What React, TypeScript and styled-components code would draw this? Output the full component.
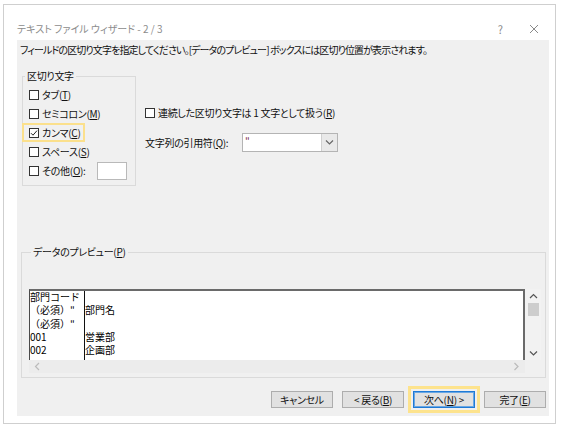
import React from 'react';
import styled, { createGlobalStyle } from 'styled-components';

const GlobalStyle = createGlobalStyle`
  html, body {
    margin: 0;
    padding: 0;
    background: #fff;
  }
  body {
    font-family: "Noto Sans CJK JP", "Noto Sans", sans-serif;
    font-feature-settings: "palt";
    color: #111;
  }
`;

type Option = { label: string; key: string; checked?: boolean; focused?: boolean };

const delimiters: Option[] = [
  { label: 'タブ', key: 'T' },
  { label: 'セミコロン', key: 'M' },
  { label: 'カンマ', key: 'C', checked: true, focused: true },
  { label: 'スペース', key: 'S' },
];

// preview grid: [column 1, column 2, row height]
const previewRows: [string, string, number][] = [
  ['部門コード', '', 12],
  ['（必須）"', '部門名', 14],
  ['（必須）"', '', 13],
  ['001', '営業部', 13],
  ['002', '企画部', 13],
];

const Accel: React.FC<{ label: string; k: string; suffix?: string }> = ({ label, k, suffix = '' }) => (
  <span>
    {label}(<u>{k}</u>){suffix}
  </span>
);

const CheckBox: React.FC<{ checked?: boolean }> = ({ checked }) => (
  <Box>
    {checked && (
      <svg width="8" height="8" viewBox="0 0 8 8">
        <polyline points="1,4.2 3,6.2 7,1.6" fill="none" stroke="#222" strokeWidth="1" />
      </svg>
    )}
  </Box>
);

const Chevron: React.FC<{ dir: 'up' | 'down' | 'left' | 'right'; color?: string }> = ({ dir, color = '#555' }) => {
  const pts = {
    up: '1,5 4.5,1.5 8,5',
    down: '1,1.5 4.5,5 8,1.5',
    left: '5,1 1.5,4.5 5,8',
    right: '1.5,1 5,4.5 1.5,8',
  }[dir];
  const vertical = dir === 'up' || dir === 'down';
  return (
    <svg width={vertical ? 9 : 7} height={vertical ? 7 : 9} viewBox={vertical ? '0 0 9 7' : '0 0 7 9'}>
      <polyline points={pts} fill="none" stroke={color} strokeWidth="1.2" />
    </svg>
  );
};

const App: React.FC = () => {
  return (
    <>
      <GlobalStyle />
      <Window>
        <TitleBar>
          <Title>テキスト ファイル ウィザード - 2 / 3</Title>
          <TitleIcons>
            <span>?</span>
            <svg width="10" height="10" viewBox="0 0 10 10">
              <path d="M1 1 L9 9 M9 1 L1 9" stroke="#8a8a8a" strokeWidth="1" />
            </svg>
          </TitleIcons>
        </TitleBar>

        <Body>
          <Instruction>
            フィールドの区切り文字を指定してください。[データのプレビュー] ボックスには区切り位置が表示されます。
          </Instruction>

          <OptionsRow>
            <DelimiterGroup>
              <GroupLabel>区切り文字</GroupLabel>
              {delimiters.map((d) => (
                <OptionRow key={d.key} $focused={d.focused}>
                  <CheckBox checked={d.checked} />
                  <Accel label={d.label} k={d.key} />
                </OptionRow>
              ))}
              <OptionRow>
                <CheckBox />
                <Accel label="その他" k="O" suffix=":" />
                <OtherInput />
              </OptionRow>
            </DelimiterGroup>

            <SideOptions>
              <Line>
                <CheckBox />
                <span>
                  連続した区切り文字は 1 文字として扱う(<u>R</u>)
                </span>
              </Line>
              <Line $gap={11}>
                <QuoteLabel>
                  <Accel label="文字列の引用符" k="Q" suffix=":" />
                </QuoteLabel>
                <Combo>
                  <ComboValue>"</ComboValue>
                  <ComboArrow>
                    <Chevron dir="down" color="#666" />
                  </ComboArrow>
                </Combo>
              </Line>
            </SideOptions>
          </OptionsRow>

          <PreviewGroup>
            <GroupLabel>
              データのプレビュー(<u>P</u>)
            </GroupLabel>
            <ListBox>
              <Sheet>
                <SheetColumn $width={55} $divider>
                  {previewRows.map(([a, , h], i) => (
                    <Cell key={i} $h={h}>
                      {a}
                    </Cell>
                  ))}
                </SheetColumn>
                <SheetColumn>
                  {previewRows.map(([, b, h], i) => (
                    <Cell key={i} $h={h}>
                      {b}
                    </Cell>
                  ))}
                </SheetColumn>
              </Sheet>
              <VScroll>
                <Chevron dir="up" color="#555" />
                <Thumb />
                <Spacer />
                <Chevron dir="down" color="#555" />
              </VScroll>
              <HScroll>
                <Chevron dir="left" color="#bbb" />
                <Chevron dir="right" color="#bbb" />
              </HScroll>
              <Corner />
            </ListBox>
          </PreviewGroup>

          <ButtonRow>
            <Button>キャンセル</Button>
            <Button>
              &lt; 戻る(<u>B</u>)
            </Button>
            <Button $primary>
              次へ(<u>N</u>) &gt;
            </Button>
            <Button>
              完了(<u>E</u>)
            </Button>
          </ButtonRow>
        </Body>
      </Window>
    </>
  );
};

export default App;

const Window = styled.div`
  box-sizing: border-box;
  width: 553px;
  height: 420px;
  margin: 4px 0 0 3px;
  border: 1px solid #cfcfcf;
  background: #fff;
  display: flex;
  flex-direction: column;
`;

const TitleBar = styled.div`
  box-sizing: border-box;
  height: 35px;
  padding: 17px 16px 4px 13px;
  display: flex;
  align-items: center;
  font-size: 10px;
  line-height: 14px;
  color: #8c8c8c;
`;

const Title = styled.span`
  flex: 1;
`;

const TitleIcons = styled.div`
  display: flex;
  align-items: center;
  gap: 26px;
  font-size: 11px;
  color: #8a8a8a;
`;

const Body = styled.div`
  box-sizing: border-box;
  height: 376px;
  margin: 0 6px 0 13px;
  padding: 3px 3px 0 3px;
  background: #f0f0f0;
  display: flex;
  flex-direction: column;
  font-size: 10px;
  letter-spacing: -0.3px;
`;

const Instruction = styled.div`
  line-height: 14px;
  white-space: nowrap;
  letter-spacing: -0.9px;
`;

const OptionsRow = styled.div`
  display: flex;
  margin-top: 12px;
`;

const Group = styled.fieldset`
  box-sizing: border-box;
  margin: 0;
  min-width: 0;
  border: 1px solid #dadada;
`;

const GroupLabel = styled.legend`
  margin-left: 2px;
  padding: 0 2px;
  font-size: 10px;
  line-height: 14px;
`;

const DelimiterGroup = styled(Group)`
  width: 114px;
  margin-left: 2px;
  padding: 2px 0 5px 0;
`;

const OptionRow = styled.label<{ $focused?: boolean }>`
  box-sizing: border-box;
  display: flex;
  align-items: center;
  gap: 3px;
  width: fit-content;
  height: 19px;
  margin-left: -1px;
  padding: 0 3px 0 5px;
  border: 2px solid ${(p) => (p.$focused ? '#fbe08c' : 'transparent')};
  line-height: 14px;
`;

const Box = styled.span`
  box-sizing: border-box;
  flex: none;
  width: 10px;
  height: 10px;
  border: 1px solid #333;
  background: #fff;
  display: inline-flex;
  align-items: center;
  justify-content: center;
`;

const OtherInput = styled.span`
  box-sizing: border-box;
  width: 30px;
  height: 18px;
  margin-left: 8px;
  border: 1px solid #b9b9b9;
  background: #fff;
`;

const SideOptions = styled.div`
  display: flex;
  flex-direction: column;
  margin-left: 9px;
  padding-top: 34px;
`;

const Line = styled.div<{ $gap?: number }>`
  display: flex;
  align-items: center;
  gap: 3px;
  height: 19px;
  margin-top: ${(p) => p.$gap ?? 0}px;
  line-height: 14px;
  white-space: nowrap;
`;

const QuoteLabel = styled.span`
  width: 94px;
`;

const Combo = styled.div`
  box-sizing: border-box;
  display: flex;
  width: 96px;
  height: 19px;
  border: 1px solid #b4b4b4;
  background: #fff;
`;

const ComboValue = styled.span`
  flex: 1;
  padding-left: 2px;
  line-height: 14px;
  color: #7a1f44;
`;

const ComboArrow = styled.span`
  width: 15px;
  display: flex;
  align-items: center;
  justify-content: center;
  background: #e9e9e9;
  border-left: 1px solid #d0d0d0;
`;

const PreviewGroup = styled(Group)`
  margin: 59px 0 0 1px;
  padding: 30px 4px 4px 7px;
`;

const ListBox = styled.div`
  display: grid;
  grid-template-columns: 1fr 16px;
  grid-template-rows: 71px 13px;
`;

const Sheet = styled.div`
  display: flex;
  overflow: hidden;
  background: #fff;
  border-top: 2px solid #6a6a6a;
  border-left: 1px solid #4a4a4a;
  border-right: 2px solid #6a6a6a;
  font-family: "Noto Sans CJK JP", sans-serif;
  font-feature-settings: normal;
  font-size: 10px;
  letter-spacing: 0;
  color: #000;
`;

const SheetColumn = styled.div<{ $width?: number; $divider?: boolean }>`
  box-sizing: border-box;
  flex: ${(p) => (p.$width ? `0 0 ${p.$width}px` : '1')};
  border-right: ${(p) => (p.$divider ? '1px solid #111' : 'none')};
  overflow: hidden;
`;

const Cell = styled.div<{ $h: number }>`
  height: ${(p) => p.$h}px;
  line-height: ${(p) => p.$h}px;
  white-space: nowrap;
`;

const VScroll = styled.div`
  display: flex;
  flex-direction: column;
  align-items: center;
  padding: 4px 0 3px;
  background: #f2f2f2;
`;

const Thumb = styled.div`
  width: 11px;
  height: 13px;
  margin-top: 3px;
  background: #cdcdcd;
`;

const Spacer = styled.div`
  flex: 1;
`;

const HScroll = styled.div`
  display: flex;
  align-items: center;
  justify-content: space-between;
  padding: 0 5px 0 5px;
  background: #ececec;
`;

const Corner = styled.div`
  background: #f0f0f0;
`;

const ButtonRow = styled.div`
  display: flex;
  justify-content: flex-end;
  gap: 9px;
  margin-top: 13px;
`;

const Button = styled.button<{ $primary?: boolean }>`
  box-sizing: border-box;
  width: 62px;
  height: 17px;
  padding: 0;
  font-family: inherit;
  font-feature-settings: "palt";
  font-size: 10px;
  letter-spacing: -0.3px;
  line-height: 14px;
  color: #111;
  background: #e1e1e1;
  border: 1px solid ${(p) => (p.$primary ? '#1f7ad6' : '#adadad')};
  box-shadow: ${(p) => (p.$primary ? 'inset 0 0 0 1px #6aa7e3' : 'none')};
  outline: ${(p) => (p.$primary ? '3px solid #fde38d' : 'none')};
  outline-offset: 2px;
`;
